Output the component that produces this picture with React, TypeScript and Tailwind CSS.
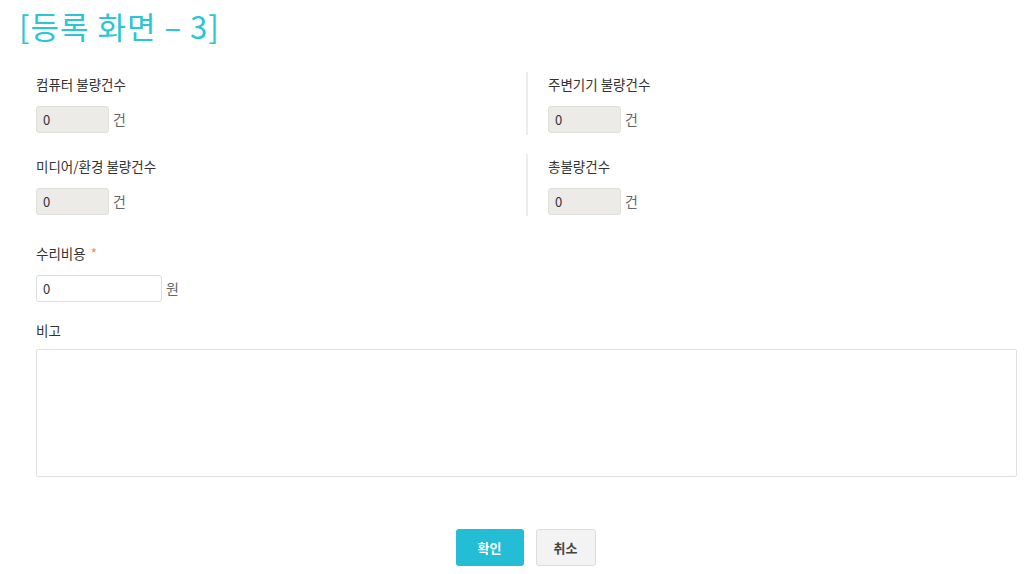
import React from 'react';

const font = { fontFamily: '"Noto Sans CJK KR", "Noto Sans", sans-serif' };

function CountField({ label, value }: { label: string; value: string }) {
  return (
    <div className="flex flex-col">
      <div className="h-[24px] leading-[24px] text-[13.5px] text-[#333]">{label}</div>
      <div className="mt-[10px] flex items-center">
        <input
          readOnly
          value={value}
          className="w-[73px] h-[27px] px-[6px] text-[13px] text-[#333] bg-[#ecebe7] border border-[#e0dfdb] rounded-[3px] outline-none"
        />
        <span className="ml-[4px] text-[14px] text-[#666]">건</span>
      </div>
    </div>
  );
}

export default function App() {
  return (
    <div className="w-[1024px] h-[574px] bg-white overflow-hidden" style={font}>
      {/* Title */}
      <div className="pl-[19px] pt-[4px] h-[48px] text-[31px] leading-[44px] tracking-[1px] text-[#29c6d5] whitespace-pre">
        [등록 화면 – 3]
      </div>

      <div className="pl-[36px] pr-[7px] pt-[24px]">
        {/* Count grid */}
        <div className="grid grid-cols-[490px_1fr] gap-y-[19px]">
          <div className="h-[63px]">
            <CountField label="컴퓨터 불량건수" value="0" />
          </div>
          <div className="h-[63px] border-l-2 border-[#ececec] pl-[20px]">
            <CountField label="주변기기 불량건수" value="0" />
          </div>
          <div className="h-[62px]">
            <CountField label="미디어/환경 불량건수" value="0" />
          </div>
          <div className="h-[62px] border-l-2 border-[#ececec] pl-[20px]">
            <CountField label="총불량건수" value="0" />
          </div>
        </div>

        {/* Repair cost */}
        <div className="mt-[25px]">
          <div className="h-[24px] leading-[24px] text-[13.5px] text-[#333]">
            수리비용 <span className="text-[#f08a4b] ml-[2px]">*</span>
          </div>
          <div className="mt-[10px] flex items-center">
            <input
              readOnly
              value="0"
              className="w-[126px] h-[27px] px-[6px] text-[13px] text-[#333] bg-white border border-[#dcdcdc] rounded-[3px] outline-none"
            />
            <span className="ml-[4px] text-[14px] text-[#666]">원</span>
          </div>
        </div>

        {/* Note */}
        <div className="mt-[16px]">
          <div className="h-[24px] leading-[24px] text-[13.5px] text-[#333]">비고</div>
          <textarea className="mt-[7px] block w-[981px] h-[128px] bg-white border border-[#e0e0e0] rounded-[2px] outline-none resize-none" />
        </div>

        {/* Buttons */}
        <div className="mt-[52px] flex justify-center gap-[12px] pr-[2px]">
          <button className="w-[68px] h-[37px] rounded-[3px] bg-[#23bed6] text-white text-[13px] font-bold">
            확인
          </button>
          <button className="w-[60px] h-[37px] rounded-[3px] bg-[#f3f3f3] border border-[#dcdcdc] text-[#444] text-[13px] font-bold">
            취소
          </button>
        </div>
      </div>
    </div>
  );
}
